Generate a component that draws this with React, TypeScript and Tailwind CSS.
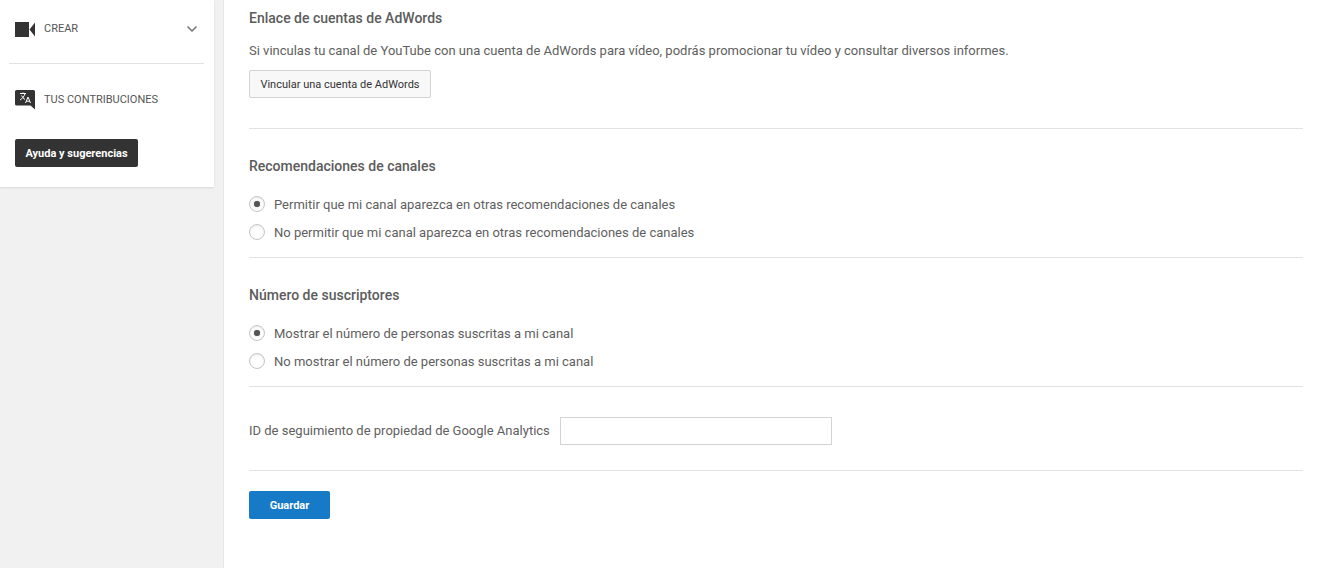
import React from "react";
import { ChevronDown } from "lucide-react";

function RadioRow({ label, checked }: { label: string; checked?: boolean }) {
  return (
    <label className="flex items-center h-[28px]">
      <span className="w-[16px] h-[16px] rounded-full border border-[#c6c6c6] bg-white flex items-center justify-center shadow-[inset_0_1px_2px_rgba(0,0,0,0.1)]">
        {checked && <span className="w-[6px] h-[6px] rounded-full bg-[#555555] shadow-[0_0_1px_#777777]" />}
      </span>
      <span className="ml-[9px] mt-[2px] text-[13px] text-[#606060]">{label}</span>
    </label>
  );
}

function SectionTitle({ children }: { children: React.ReactNode }) {
  return <h2 className="text-[14px] leading-[18px] font-medium text-[#5c5c5c]">{children}</h2>;
}

export default function App() {
  return (
    <div className="flex h-[568px] overflow-hidden bg-[#f1f1f1] font-['Roboto',sans-serif]">
      <aside className="w-[214px] h-[187px] shrink-0 bg-white shadow-[0_1px_2px_rgba(0,0,0,0.1)] pt-[20px]">
        <div className="flex items-center h-[18px] pl-[15px] pr-[14px]">
          <svg width="21" height="15" viewBox="0 0 21 15" className="shrink-0">
            <rect x="0" y="0" width="14" height="15" fill="#333333" />
            <path d="M14.5 7.5 L20 0.5 V14.5 Z" fill="#333333" />
          </svg>
          <span className="ml-[8px] text-[11px] text-[#555555]">CREAR</span>
          <ChevronDown size={16} strokeWidth={2.5} className="ml-auto text-[#777777]" />
        </div>
        <div className="ml-[9px] mr-[10px] mt-[25px] border-t border-[#e2e2e2]" />
        <div className="flex items-center h-[22px] mt-[25px] pl-[15px]">
          <svg width="20" height="20" viewBox="0 0 20 20" className="shrink-0">
            <path d="M1.5 0 H18.5 A1.5 1.5 0 0 1 20 1.5 V19.5 L15.5 15.5 H1.5 A1.5 1.5 0 0 1 0 14 V1.5 A1.5 1.5 0 0 1 1.5 0 Z" fill="#333333" />
            <path d="M5 3.5 H11 M8 2.5 V3.5 M10 3.5 C9.5 6 7.5 8.5 5 10 M6.5 5.5 C7.2 7.2 8.5 8.5 10 9.5" stroke="#ffffff" strokeWidth="1" fill="none" />
            <path d="M10.5 13 L13 7 L15.5 13 M11.3 11.2 H14.7" stroke="#ffffff" strokeWidth="1" fill="none" />
          </svg>
          <span className="ml-[9px] text-[11px] text-[#555555]">TUS CONTRIBUCIONES</span>
        </div>
        <button className="block ml-[15px] mt-[28px] w-[123px] h-[28px] pt-[2px] rounded-[2px] bg-[#333333] text-white text-[11px] font-bold">
          Ayuda y sugerencias
        </button>
      </aside>

      <main className="ml-[9px] flex-1 bg-white border-l border-[#e8e8e8] pl-[25px] pr-[26px] pt-[9px]">
        <SectionTitle>Enlace de cuentas de AdWords</SectionTitle>
        <p className="mt-[15px] text-[13px] leading-[18px] text-[#606060]">
          Si vinculas tu canal de YouTube con una cuenta de AdWords para vídeo, podrás promocionar tu vídeo y consultar diversos informes.
        </p>
        <button className="block mt-[10px] w-[182px] h-[28px] pt-[2px] rounded-[2px] border border-[#d3d3d3] bg-[#f8f8f8] text-[11px] font-normal text-[#333333]">
          Vincular una cuenta de AdWords
        </button>

        <div className="mt-[30px] border-t border-[#e2e2e2]" />

        <div className="mt-[28px]">
          <SectionTitle>Recomendaciones de canales</SectionTitle>
        </div>
        <div className="mt-[15px]">
          <RadioRow checked label="Permitir que mi canal aparezca en otras recomendaciones de canales" />
          <RadioRow label="No permitir que mi canal aparezca en otras recomendaciones de canales" />
        </div>

        <div className="mt-[11px] border-t border-[#e2e2e2]" />

        <div className="mt-[28px]">
          <SectionTitle>Número de suscriptores</SectionTitle>
        </div>
        <div className="mt-[15px]">
          <RadioRow checked label="Mostrar el número de personas suscritas a mi canal" />
          <RadioRow label="No mostrar el número de personas suscritas a mi canal" />
        </div>

        <div className="mt-[11px] border-t border-[#e2e2e2]" />

        <div className="flex items-center mt-[30px]">
          <span className="text-[13px] text-[#606060]">ID de seguimiento de propiedad de Google Analytics</span>
          <input className="ml-[10px] w-[272px] h-[28px] border border-[#d3d3d3] bg-white" />
        </div>

        <div className="mt-[25px] border-t border-[#e2e2e2]" />

        <button className="block mt-[20px] w-[81px] h-[28px] pt-[2px] rounded-[2px] bg-[#167ac6] text-white text-[11px] font-bold">
          Guardar
        </button>
      </main>
    </div>
  );
}
